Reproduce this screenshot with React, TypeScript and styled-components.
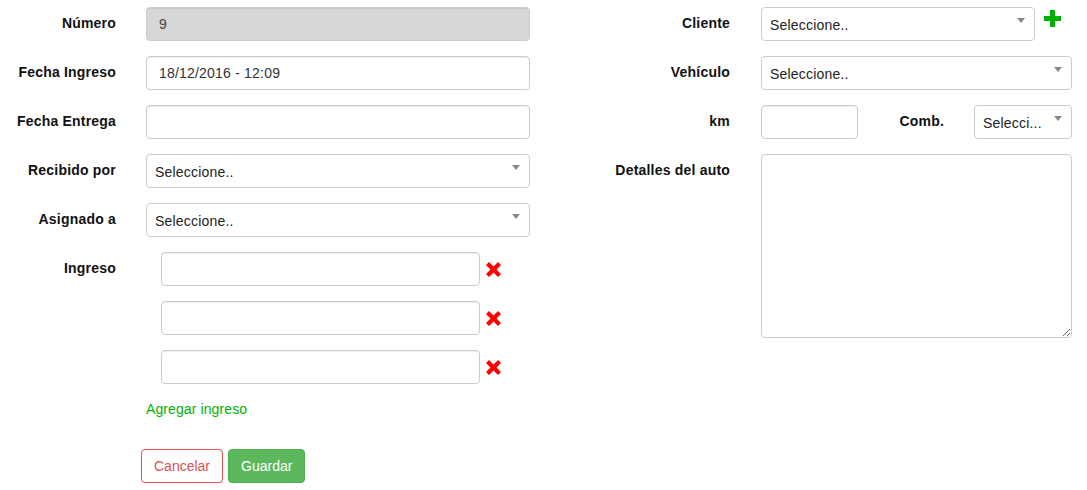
import React from "react";
import styled, { createGlobalStyle } from "styled-components";

const Global = createGlobalStyle`
  html, body { margin: 0; padding: 0; background: #fff; }
  body { font-family: "Liberation Sans", Arial, sans-serif; font-size: 14px; color: #333; letter-spacing: 0.2px; }
  * { box-sizing: border-box; }
`;

const Page = styled.div`
  display: flex;
  gap: 70px;
  padding-top: 7px;
  width: 1087px;
`;

const Column = styled.div<{ $label: number; $gap: number; $control: number }>`
  display: grid;
  grid-template-columns: ${(p) => p.$label}px ${(p) => p.$control}px;
  column-gap: ${(p) => p.$gap}px;
  row-gap: 15px;
  align-content: start;
`;

const Label = styled.label`
  font-weight: bold;
  text-align: right;
  line-height: 32px;
  color: #111;
  white-space: nowrap;
`;

const Input = styled.input<{ $width?: number }>`
  display: block;
  width: ${(p) => (p.$width ? `${p.$width}px` : "100%")};
  height: 34px;
  padding: 6px 12px;
  font: inherit;
  font-size: 14px;
  letter-spacing: 0.2px;
  color: #333;
  background: #fff;
  border: 1px solid #ccc;
  border-radius: 4px;
  box-shadow: inset 0 1px 1px rgba(0, 0, 0, 0.075);
  outline: none;
  &:disabled { background: #d7d7d7; color: #444; }
`;

const SelectBox = styled.div<{ $width?: number }>`
  position: relative;
  width: ${(p) => (p.$width ? `${p.$width}px` : "100%")};
  height: 34px;
  padding: 1px 24px 0 8px;
  display: flex;
  align-items: center;
  border: 1px solid #ccc;
  border-radius: 4px;
  background: #fff;
  color: #222;
  white-space: nowrap;
  overflow: hidden;
  &::after {
    content: "";
    position: absolute;
    right: 9px;
    top: 10px;
    border-left: 4px solid transparent;
    border-right: 4px solid transparent;
    border-top: 5px solid #888;
  }
`;

const Select = ({ text, width }: { text: string; width?: number }) => (
  <SelectBox $width={width}>{text}</SelectBox>
);

const InlineRow = styled.div`
  display: flex;
  align-items: flex-start;
`;

const IconButton = styled.span`
  display: inline-flex;
  margin-left: 9px;
  margin-top: 3px;
`;

const IngresoList = styled.div`
  display: flex;
  flex-direction: column;
  gap: 15px;
  padding-left: 15px;
`;

const IngresoRow = styled.div`
  display: flex;
  align-items: center;
`;

const RemoveIcon = styled.span`
  display: inline-flex;
  margin-left: 6px;
`;

const AddLink = styled.a`
  display: block;
  margin-top: 15px;
  line-height: 20px;
  color: #00b300;
  text-decoration: none;
  letter-spacing: 0.1px;
`;

const Actions = styled.div`
  display: flex;
  gap: 5px;
  margin-top: 30px;
  margin-left: -5px;
`;

const Button = styled.button<{ $variant: "cancel" | "save" }>`
  height: 34px;
  padding: 6px 12px;
  font: inherit;
  font-size: 14px;
  letter-spacing: 0;
  border-radius: 4px;
  border: 1px solid ${(p) => (p.$variant === "cancel" ? "#d9534f" : "#4cae4c")};
  background: ${(p) => (p.$variant === "cancel" ? "#fff" : "#5cb85c")};
  color: ${(p) => (p.$variant === "cancel" ? "#d9534f" : "#fff")};
`;

const CombRow = styled.div`
  display: grid;
  grid-template-columns: 97px 1fr 98px;
  column-gap: 30px;
`;

const TextArea = styled.textarea`
  display: block;
  width: 100%;
  height: 184px;
  border: 1px solid #ccc;
  border-radius: 4px;
  font: inherit;
  padding: 6px 12px;
  resize: vertical;
  outline: none;
`;

const Spacer = styled.div``;

const XIcon = () => (
  <svg width="15" height="15" viewBox="0 0 15 15">
    <polygon
      fill="#f00"
      points="0,3 3,0 7.5,4.5 12,0 15,3 10.5,7.5 15,12 12,15 7.5,10.5 3,15 0,12 4.5,7.5"
    />
  </svg>
);

const PlusIcon = () => (
  <svg width="17" height="17" viewBox="0 0 17 17">
    <polygon fill="#00b000" points="6,0 11,0 11,6 17,6 17,11 11,11 11,17 6,17 6,11 0,11 0,6 6,6" />
  </svg>
);

export default function App() {
  return (
    <>
      <Global />
      <Page>
        <Column $label={116} $gap={30} $control={384}>
          <Label>Número</Label>
          <Input disabled value="9" readOnly />
          <Label>Fecha Ingreso</Label>
          <Input value="18/12/2016 - 12:09" readOnly />
          <Label>Fecha Entrega</Label>
          <Input />
          <Label>Recibido por</Label>
          <Select text="Seleccione.." />
          <Label>Asignado a</Label>
          <Select text="Seleccione.." />
          <Label>Ingreso</Label>
          <div>
            <IngresoList>
              {[0, 1, 2].map((i) => (
                <IngresoRow key={i}>
                  <Input $width={319} />
                  <RemoveIcon>
                    <XIcon />
                  </RemoveIcon>
                </IngresoRow>
              ))}
            </IngresoList>
            <AddLink href="#">Agregar ingreso</AddLink>
            <Actions>
              <Button $variant="cancel">Cancelar</Button>
              <Button $variant="save">Guardar</Button>
            </Actions>
          </div>
        </Column>
        <Column $label={130} $gap={31} $control={311}>
          <Label>Cliente</Label>
          <InlineRow>
            <Select text="Seleccione.." width={274} />
            <IconButton>
              <PlusIcon />
            </IconButton>
          </InlineRow>
          <Label>Vehículo</Label>
          <Select text="Seleccione.." />
          <Label>km</Label>
          <CombRow>
            <Input />
            <Label>Comb.</Label>
            <Select text="Selecci..." />
          </CombRow>
          <Label>Detalles del auto</Label>
          <TextArea />
          <Spacer />
        </Column>
      </Page>
    </>
  );
}
